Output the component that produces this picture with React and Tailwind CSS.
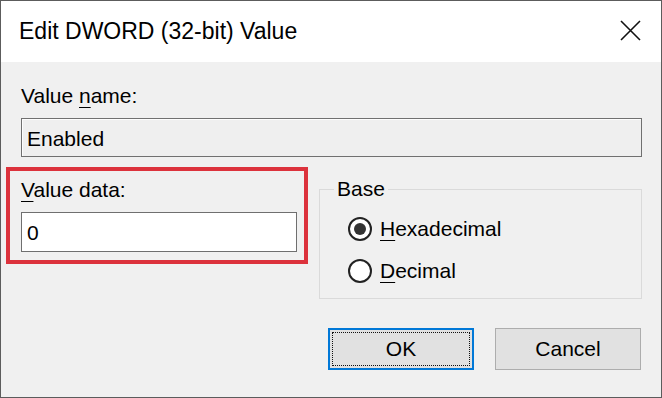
import React, { useState } from "react";

const font = { fontFamily: '"Liberation Sans", Arial, sans-serif' };

function Radio({ checked, onClick, children }) {
  return (
    <div className="flex items-center h-[23px] cursor-default" onClick={onClick}>
      <span className="flex items-center justify-center w-[24px] h-[24px] rounded-full border-2 border-[#222] bg-white">
        {checked && <span className="w-[12px] h-[12px] rounded-full bg-[#333]" />}
      </span>
      <span className="ml-[8px] text-[21px] leading-[28px] text-black">{children}</span>
    </div>
  );
}

export default function App() {
  const [base, setBase] = useState("hex");
  const [value, setValue] = useState("0");

  return (
    <div
      className="w-[662px] h-[398px] border border-[#5c5c5c] bg-[#f0f0f0] flex flex-col overflow-hidden"
      style={font}
    >
      {/* title bar */}
      <div className="h-[61px] bg-white flex items-center justify-between pl-[18px] pr-[20px] shrink-0">
        <span className="text-[23px] text-black">Edit DWORD (32-bit) Value</span>
        <svg width="21" height="21" viewBox="0 0 21 21" className="-mt-[2px]">
          <path d="M1 1 L20 20 M20 1 L1 20" stroke="#111" strokeWidth="1.6" fill="none" />
        </svg>
      </div>

      {/* body */}
      <div className="flex flex-col text-black">
        <div className="ml-[20px] mt-[20px] text-[21px] leading-[28px]">
          Value <span className="underline underline-offset-[4px] decoration-1">n</span>ame:
        </div>
        <div className="ml-[20px] mt-[8px] w-[621px] h-[39px] border border-[#707070] bg-[#efefef] shadow-[inset_1px_1px_0_#fdfdfd] flex items-center pl-[5px] pt-[2px] text-[21px]">
          Enabled
        </div>

        <div className="flex items-start mt-[10px]">
          {/* highlighted value data */}
          <div className="ml-[5px] w-[302px] h-[97px] border-[4px] border-[#dc323c] pl-[11px] pr-[6px] pt-[5px]">
            <div className="text-[21px] leading-[28px]">
              <span className="underline underline-offset-[4px] decoration-1">V</span>alue data:
            </div>
            <input
              value={value}
              onChange={(e) => setValue(e.target.value)}
              className="mt-[8px] w-[276px] h-[40px] border border-[#6f6f6f] bg-white pl-[5px] pt-[2px] text-[21px] outline-none"
              style={font}
            />
          </div>

          {/* base group */}
          <div className="relative ml-[11px] mt-[22px] w-[323px] h-[110px] border border-[#dadada] pl-[28px] pt-[27px] flex flex-col gap-[19px]">
            <span className="absolute -top-[15px] left-[14px] px-[3px] bg-[#f0f0f0] text-[21px] leading-[28px]">
              Base
            </span>
            <Radio checked={base === "hex"} onClick={() => setBase("hex")}>
              <span className="underline underline-offset-[4px] decoration-1">H</span>exadecimal
            </Radio>
            <Radio checked={base === "dec"} onClick={() => setBase("dec")}>
              <span className="underline underline-offset-[4px] decoration-1">D</span>ecimal
            </Radio>
          </div>
        </div>

        {/* buttons */}
        <div className="flex mt-[29px] ml-[327px] gap-[21px]">
          <button
            className="relative w-[146px] h-[42px] border-2 border-[#0078d7] bg-[#e1e1e1] text-[21px] text-black flex items-center justify-center"
            style={font}
          >
            <span className="absolute inset-[2px] border border-dotted border-[#111]" />
            OK
          </button>
          <button
            className="w-[146px] h-[42px] border border-[#adadad] bg-[#e1e1e1] text-[21px] text-black flex items-center justify-center"
            style={font}
          >
            Cancel
          </button>
        </div>
      </div>
    </div>
  );
}
